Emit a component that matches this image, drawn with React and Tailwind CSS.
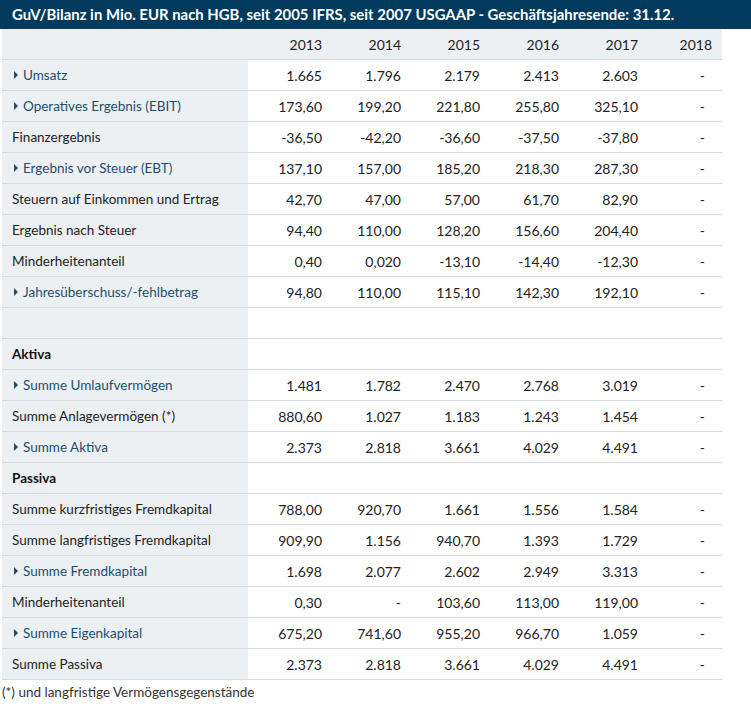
const years = ["2013", "2014", "2015", "2016", "2017", "2018"];

const rows = [
  { label: "Umsatz", link: true, v: ["1.665", "1.796", "2.179", "2.413", "2.603", "-"] },
  { label: "Operatives Ergebnis (EBIT)", link: true, v: ["173,60", "199,20", "221,80", "255,80", "325,10", "-"] },
  { label: "Finanzergebnis", v: ["-36,50", "-42,20", "-36,60", "-37,50", "-37,80", "-"] },
  { label: "Ergebnis vor Steuer (EBT)", link: true, v: ["137,10", "157,00", "185,20", "218,30", "287,30", "-"] },
  { label: "Steuern auf Einkommen und Ertrag", v: ["42,70", "47,00", "57,00", "61,70", "82,90", "-"] },
  { label: "Ergebnis nach Steuer", v: ["94,40", "110,00", "128,20", "156,60", "204,40", "-"] },
  { label: "Minderheitenanteil", v: ["0,40", "0,020", "-13,10", "-14,40", "-12,30", "-"] },
  { label: "Jahresüberschuss/-fehlbetrag", link: true, v: ["94,80", "110,00", "115,10", "142,30", "192,10", "-"] },
  { label: "", v: ["", "", "", "", "", ""] },
  { label: "Aktiva", bold: true, v: ["", "", "", "", "", ""] },
  { label: "Summe Umlaufvermögen", link: true, v: ["1.481", "1.782", "2.470", "2.768", "3.019", "-"] },
  { label: "Summe Anlagevermögen (*)", v: ["880,60", "1.027", "1.183", "1.243", "1.454", "-"] },
  { label: "Summe Aktiva", link: true, v: ["2.373", "2.818", "3.661", "4.029", "4.491", "-"] },
  { label: "Passiva", bold: true, v: ["", "", "", "", "", ""] },
  { label: "Summe kurzfristiges Fremdkapital", v: ["788,00", "920,70", "1.661", "1.556", "1.584", "-"] },
  { label: "Summe langfristiges Fremdkapital", v: ["909,90", "1.156", "940,70", "1.393", "1.729", "-"] },
  { label: "Summe Fremdkapital", link: true, v: ["1.698", "2.077", "2.602", "2.949", "3.313", "-"] },
  { label: "Minderheitenanteil", v: ["0,30", "-", "103,60", "113,00", "119,00", "-"] },
  { label: "Summe Eigenkapital", link: true, v: ["675,20", "741,60", "955,20", "966,70", "1.059", "-"] },
  { label: "Summe Passiva", v: ["2.373", "2.818", "3.661", "4.029", "4.491", "-"] },
];

function Arrow() {
  return (
    <svg width="4" height="8" viewBox="0 0 4 8" className="ml-[2px] mr-[5px] shrink-0">
      <path d="M0 0 L4 4 L0 8 Z" fill="#1d4e6e" />
    </svg>
  );
}

export default function App() {
  return (
    <div className="w-[751px] bg-white text-[#222] font-['Lato',sans-serif] text-[14px]">
      <div className="h-[29px] bg-[#003a5c] text-white font-bold text-[14.9px] flex items-center pl-[12px] whitespace-nowrap">
        GuV/Bilanz in Mio. EUR nach HGB, seit 2005 IFRS, seit 2007 USGAAP - Geschäftsjahresende: 31.12.
      </div>
      <div className="ml-[2px] w-[720px]">
        <div className="flex h-[31px] bg-[#edf0f3] border-b border-[#d3dbe1]">
          <div className="w-[246px]" />
          {years.map((y, i) => (
            <div
              key={y}
              className={`w-[79px] flex items-center justify-end ${i === 5 ? "pr-[10px]" : "pr-[5px]"}`}
            >
              {y}
            </div>
          ))}
        </div>
        {rows.map((r, idx) => (
          <div key={idx} className="flex h-[31px] border-b border-[#d3dbe1]">
            <div className="w-[246px] bg-[#edf0f3] flex items-center pl-[10px] whitespace-nowrap text-[13.5px]">
              {r.link && <Arrow />}
              <span className={r.bold ? "font-bold text-[#111]" : r.link ? "text-[#1d4e6e]" : "text-[#222]"}>
                {r.label}
              </span>
            </div>
            {r.v.map((v, i) => (
              <div
                key={i}
                className={`w-[79px] flex items-center justify-end ${i === 5 ? "pr-[17px]" : "pr-[5px]"}`}
              >
                {v}
              </div>
            ))}
          </div>
        ))}
      </div>
      <div className="pl-[2px] pt-[2px] text-[#333] text-[13.5px]">(*) und langfristige Vermögensgegenstände</div>
    </div>
  );
}
